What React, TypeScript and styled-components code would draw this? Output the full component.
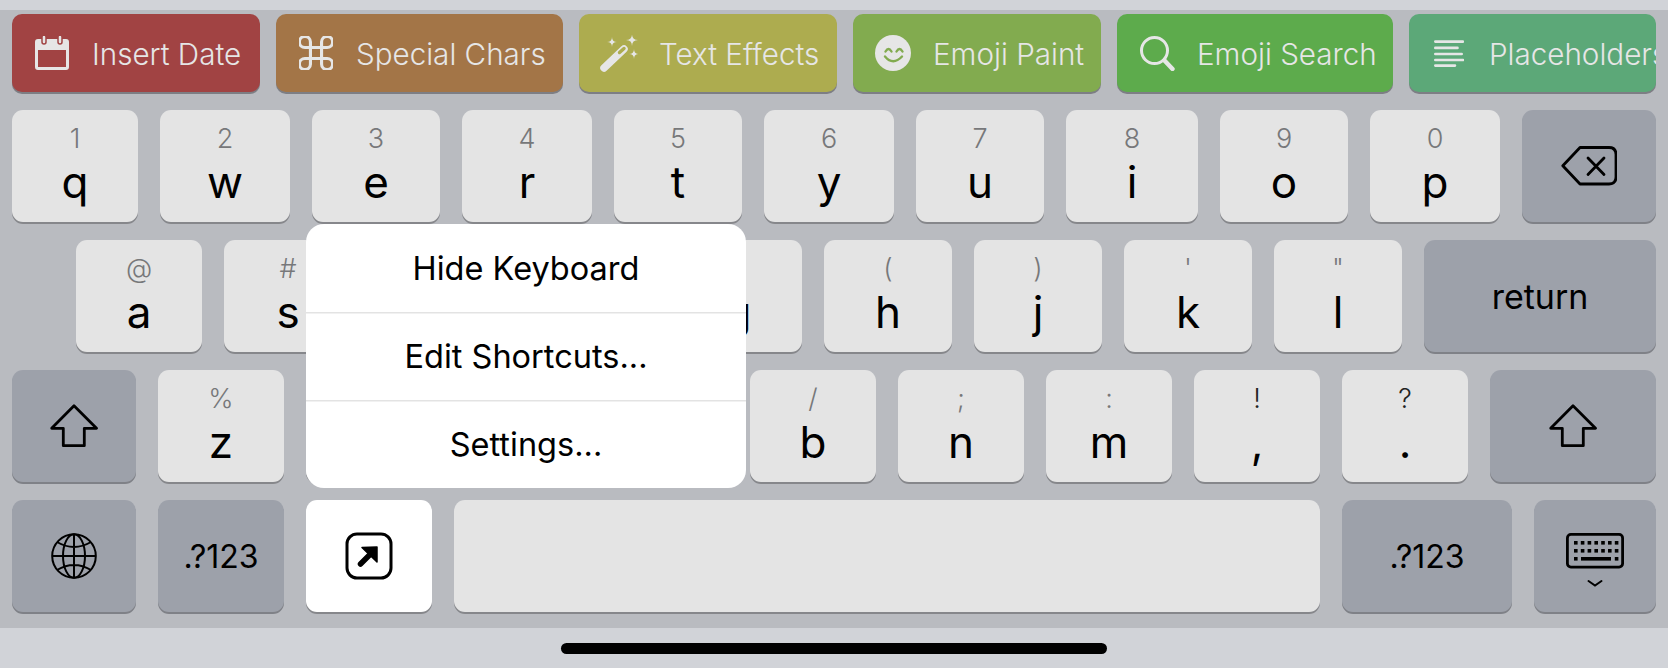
import React from "react"
import styled, { createGlobalStyle } from "styled-components"

const GlobalStyle = createGlobalStyle`
    html, body {
        margin: 0;
        height: 668px;
        overflow: hidden;
        background: #d1d3d8;
        font-family: Inter, "Liberation Sans", sans-serif;
    }
`

const star = (x: number, y: number, r: number) =>
    `M${x} ${y - r}Q${x} ${y} ${x + r} ${y}Q${x} ${y} ${x} ${y + r}Q${x} ${y} ${x - r} ${y}Q${x} ${y} ${x} ${y - r}Z`

const CalendarIcon = ({ bg }: { bg: string }) => (
    <svg width="34" height="34" viewBox="0 0 34 34">
        <path
            fill="currentColor"
            fillRule="evenodd"
            d="M3 3h28a3 3 0 0 1 3 3v25a3 3 0 0 1-3 3H3a3 3 0 0 1-3-3V6a3 3 0 0 1 3-3zM3 14v17h28V14z"
        />
        <rect x="7" y="-1" width="4" height="9" rx="2" fill="currentColor" stroke={bg} strokeWidth="1.5" />
        <rect x="23" y="-1" width="4" height="9" rx="2" fill="currentColor" stroke={bg} strokeWidth="1.5" />
    </svg>
)

const CommandIcon = () => (
    <svg width="34" height="34" viewBox="2.8 2.8 18.4 18.4" fill="none" stroke="currentColor" strokeWidth="1.7">
        <path d="M15 6v12a3 3 0 1 0 3-3H6a3 3 0 1 0 3 3V6a3 3 0 1 0-3 3h12a3 3 0 1 0-3-3" />
    </svg>
)

const WandIcon = ({ bg }: { bg: string }) => (
    <svg width="38" height="37" viewBox="0 0 38 37">
        <path d="M4 33L24 14" stroke="currentColor" strokeWidth="7.5" strokeLinecap="round" />
        <path d="M19.5 17.5L24 13.5" stroke={bg} strokeWidth="3.4" strokeLinecap="round" />
        <path fill="currentColor" d={star(12, 7, 5)} />
        <path fill="currentColor" d={star(32, 5, 6)} />
        <path fill="currentColor" d={star(34, 19, 5)} />
    </svg>
)

const SmileIcon = ({ bg }: { bg: string }) => (
    <svg width="36" height="36" viewBox="0 0 36 36">
        <circle cx="18" cy="18" r="18" fill="currentColor" />
        <g fill="none" stroke={bg} strokeWidth="2.4" strokeLinecap="round">
            <path d="M10.5 16.5Q13.5 11.5 16.5 16.5" />
            <path d="M21.5 16.5Q24.5 11.5 27.5 16.5" />
            <path d="M10 21.5Q18 31 27 21.5" />
        </g>
    </svg>
)

const SearchIcon = () => (
    <svg width="35" height="35" viewBox="0 0 35 35" fill="none" stroke="currentColor">
        <circle cx="14.5" cy="14.5" r="13" strokeWidth="3" />
        <path d="M24.5 24.5L32.5 33" strokeWidth="4.4" strokeLinecap="round" />
    </svg>
)

const LinesIcon = () => (
    <svg width="30" height="27" viewBox="0 0 30 27" stroke="currentColor" strokeWidth="2.6" strokeLinecap="round">
        <path d="M1.3 1.6H29M1.3 7.9H23.5M1.3 14H27.7M1.3 20H29M1.3 25.6H21" />
    </svg>
)

const BackspaceIcon = () => (
    <svg width="56" height="40" viewBox="0 0 56 40" fill="none" stroke="#000" strokeWidth="2.8" strokeLinejoin="round" strokeLinecap="round">
        <path d="M1.8 19.7L19 1.5H48Q55 1.5 55 8.5V31Q55 38 48 38H19Z" />
        <path d="M27 12L43 28.5M43 12L27 28.5" />
    </svg>
)

const ShiftIcon = () => (
    <svg width="48" height="44" viewBox="0 0 48 44" fill="none" stroke="#000" strokeWidth="2.8" strokeLinejoin="round">
        <path d="M24 1.8L46.5 24.3H34.3V41.7H13.3V24.3H1.7Z" />
    </svg>
)

const GlobeIcon = () => (
    <svg width="46" height="46" viewBox="0 0 46 46" fill="none" stroke="#000" strokeWidth="2">
        <circle cx="23" cy="23" r="21.8" />
        <ellipse cx="23" cy="23" rx="11" ry="21.8" />
        <path d="M23 1V45M1 23H45M6 9Q23 19 40 9M6 37Q23 27 40 37" />
    </svg>
)

const ShortcutIcon = () => (
    <svg width="48" height="48" viewBox="0 0 48 48" fill="none">
        <rect x="2" y="2" width="44" height="44" rx="10" stroke="#000" strokeWidth="3" />
        <path d="M15.5 32L28 19.5" stroke="#000" strokeWidth="5.5" strokeLinecap="round" />
        <path d="M17 15.5L32 15L32 30Z" fill="#000" stroke="#000" strokeWidth="1.5" strokeLinejoin="round" />
    </svg>
)

const KeyboardIcon = () => (
    <svg width="58" height="54" viewBox="0 0 58 54" fill="none">
        <rect x="1.4" y="1.4" width="55.2" height="32.7" rx="3.5" stroke="#000" strokeWidth="2.8" />
        <g fill="#000">
            {[0, 1, 2, 3, 4, 5, 6].map((i) => (
                <React.Fragment key={i}>
                    <rect x={8 + i * 6.8} y="8" width="3.6" height="3.6" />
                    <rect x={8 + i * 6.8} y="16" width="3.6" height="3.6" />
                </React.Fragment>
            ))}
            <rect x="8" y="24" width="3.6" height="3.6" />
            <rect x="15" y="24" width="30" height="3.6" />
            <rect x="48.8" y="24" width="3.6" height="3.6" />
        </g>
        <path d="M22.5 48L29 52.5L35.5 48" stroke="#000" strokeWidth="2" strokeLinecap="round" />
    </svg>
)

const chips = [
    { label: "Insert Date", color: "#a14343", width: 248, icon: (bg: string) => <CalendarIcon bg={bg} /> },
    { label: "Special Chars", color: "#a37547", width: 287, icon: () => <CommandIcon /> },
    { label: "Text Effects", color: "#adac4f", width: 258, icon: (bg: string) => <WandIcon bg={bg} /> },
    { label: "Emoji Paint", color: "#82ab4f", width: 248, icon: (bg: string) => <SmileIcon bg={bg} /> },
    { label: "Emoji Search", color: "#5dab4c", width: 276, icon: () => <SearchIcon /> },
    { label: "Placeholders", color: "#5ca878", width: 247, icon: () => <LinesIcon /> },
]

type LetterKey = { letter: string; hint: string; width: number; darkHint?: boolean }

const row1: LetterKey[] = [
    { letter: "q", hint: "1", width: 126 },
    { letter: "w", hint: "2", width: 130 },
    { letter: "e", hint: "3", width: 128 },
    { letter: "r", hint: "4", width: 130 },
    { letter: "t", hint: "5", width: 128 },
    { letter: "y", hint: "6", width: 130 },
    { letter: "u", hint: "7", width: 128 },
    { letter: "i", hint: "8", width: 132 },
    { letter: "o", hint: "9", width: 128 },
    { letter: "p", hint: "0", width: 130 },
]

const row2: LetterKey[] = [
    { letter: "a", hint: "@", width: 126 },
    { letter: "s", hint: "#", width: 128 },
    { letter: "d", hint: "$", width: 128 },
    { letter: "f", hint: "&", width: 128 },
    { letter: "g", hint: "*", width: 128 },
    { letter: "h", hint: "(", width: 128 },
    { letter: "j", hint: ")", width: 128 },
    { letter: "k", hint: "'", width: 128 },
    { letter: "l", hint: '"', width: 128 },
]

const row3: LetterKey[] = [
    { letter: "z", hint: "%", width: 126 },
    { letter: "x", hint: "-", width: 126 },
    { letter: "c", hint: "+", width: 126 },
    { letter: "v", hint: "=", width: 126 },
    { letter: "b", hint: "/", width: 126 },
    { letter: "n", hint: ";", width: 126 },
    { letter: "m", hint: ":", width: 126 },
    { letter: ",", hint: "!", width: 126, darkHint: true },
    { letter: ".", hint: "?", width: 126, darkHint: true },
]

const renderKeys = (keys: LetterKey[]) =>
    keys.map((key) => (
        <S.Key key={key.letter} $width={key.width}>
            <S.Hint $dark={key.darkHint}>{key.hint}</S.Hint>
            <S.Letter>{key.letter}</S.Letter>
        </S.Key>
    ))

export default function App() {
    return (
        <>
            <GlobalStyle />
            <S.TopStrip />
            <S.Keyboard>
                <S.ChipBar>
                    {chips.map((chip) => (
                        <S.Chip key={chip.label} $width={chip.width} $color={chip.color}>
                            <S.ChipIcon>{chip.icon(chip.color)}</S.ChipIcon>
                            <S.ChipLabel>{chip.label}</S.ChipLabel>
                        </S.Chip>
                    ))}
                </S.ChipBar>
                <S.Row>
                    {renderKeys(row1)}
                    <S.ActionKey $width={134}>
                        <BackspaceIcon />
                    </S.ActionKey>
                </S.Row>
                <S.Row $inset={76}>
                    {renderKeys(row2)}
                    <S.ActionKey $width={232}>
                        <S.ActionText $size={34}>return</S.ActionText>
                    </S.ActionKey>
                </S.Row>
                <S.Row>
                    <S.ActionKey $width={124}>
                        <ShiftIcon />
                    </S.ActionKey>
                    {renderKeys(row3)}
                    <S.ActionKey $width={166}>
                        <ShiftIcon />
                    </S.ActionKey>
                </S.Row>
                <S.Row>
                    <S.ActionKey $width={124}>
                        <GlobeIcon />
                    </S.ActionKey>
                    <S.ActionKey $width={126}>
                        <S.ActionText $size={32}>.?123</S.ActionText>
                    </S.ActionKey>
                    <S.ShortcutKey>
                        <ShortcutIcon />
                    </S.ShortcutKey>
                    <S.SpaceKey />
                    <S.ActionKey $width={170}>
                        <S.ActionText $size={32}>.?123</S.ActionText>
                    </S.ActionKey>
                    <S.ActionKey $width={122}>
                        <S.DismissIcon>
                            <KeyboardIcon />
                        </S.DismissIcon>
                    </S.ActionKey>
                </S.Row>
                <S.Menu>
                    <S.MenuItem>Hide Keyboard</S.MenuItem>
                    <S.MenuItem>Edit Shortcuts...</S.MenuItem>
                    <S.MenuItem>Settings...</S.MenuItem>
                </S.Menu>
            </S.Keyboard>
            <S.HomeArea>
                <S.HomeBar />
            </S.HomeArea>
        </>
    )
}

const S = {
    TopStrip: styled.div`
        height: 10px;
        background: #d1d3d8;
    `,
    Keyboard: styled.div`
        position: relative;
        height: 618px;
        box-sizing: border-box;
        background: #b9bbc0;
        display: flex;
        flex-direction: column;
        gap: 18px;
    `,
    ChipBar: styled.div`
        display: flex;
        gap: 16px;
        padding: 4px 12px 0;
    `,
    Chip: styled.div<{ $width: number; $color: string }>`
        width: ${(p) => p.$width}px;
        height: 78px;
        flex: none;
        display: flex;
        align-items: center;
        overflow: hidden;
        border-radius: 10px;
        background: ${(p) => p.$color};
        box-shadow: 0 2px 0 #7d7e84;
        color: #e6e6e6;
    `,
    ChipIcon: styled.div`
        width: 80px;
        flex: none;
        display: flex;
        justify-content: center;
    `,
    ChipLabel: styled.span`
        margin-top: 2px;
        font-size: 29.6px;
        font-weight: 300;
        white-space: nowrap;
    `,
    Row: styled.div<{ $inset?: number }>`
        display: flex;
        gap: 22px;
        padding-left: ${(p) => p.$inset ?? 12}px;
    `,
    Key: styled.div<{ $width: number }>`
        width: ${(p) => p.$width}px;
        height: 112px;
        flex: none;
        box-sizing: border-box;
        padding-top: 14px;
        border-radius: 11px;
        background: #e4e4e4;
        box-shadow: 0 2px 0 #86878b;
        text-align: center;
    `,
    Hint: styled.div<{ $dark?: boolean }>`
        height: 30px;
        font-size: 27px;
        font-weight: 300;
        line-height: 30px;
        color: ${(p) => (p.$dark ? "#222" : "#77787a")};
    `,
    Letter: styled.div`
        font-size: 44px;
        line-height: 56px;
        color: #000;
    `,
    ActionKey: styled.div<{ $width: number }>`
        width: ${(p) => p.$width}px;
        height: 112px;
        flex: none;
        display: flex;
        align-items: center;
        justify-content: center;
        border-radius: 11px;
        background: #9da1aa;
        box-shadow: 0 2px 0 #7f8187;
    `,
    ActionText: styled.span<{ $size: number }>`
        font-size: ${(p) => p.$size}px;
        color: #000;
    `,
    DismissIcon: styled.div`
        display: flex;
        margin-top: 7px;
    `,
    ShortcutKey: styled.div`
        width: 126px;
        height: 112px;
        flex: none;
        display: flex;
        align-items: center;
        justify-content: center;
        border-radius: 11px;
        background: #fff;
        box-shadow: 0 2px 0 #86878b;
    `,
    SpaceKey: styled.div`
        width: 866px;
        height: 112px;
        flex: none;
        border-radius: 11px;
        background: #e4e4e4;
        box-shadow: 0 2px 0 #86878b;
    `,
    Menu: styled.div`
        position: absolute;
        top: 214px;
        left: 306px;
        width: 440px;
        display: flex;
        flex-direction: column;
        overflow: hidden;
        border-radius: 18px;
        background: #fff;
    `,
    MenuItem: styled.div`
        height: 88px;
        display: flex;
        align-items: center;
        justify-content: center;
        font-size: 32.5px;
        color: #000;

        & + & {
            box-shadow: inset 0 1.5px 0 #e3e3e3;
        }
    `,
    HomeArea: styled.div`
        height: 40px;
        display: flex;
        align-items: center;
        justify-content: center;
        background: #d1d3d8;
    `,
    HomeBar: styled.div`
        width: 546px;
        height: 11px;
        border-radius: 6px;
        background: #000;
    `,
}
